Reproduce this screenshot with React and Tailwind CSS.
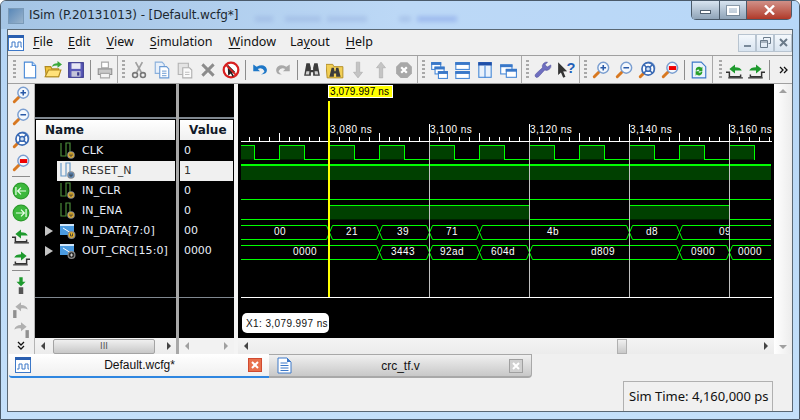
// ISim waveform window
const GREEN = '#00ff00';
const FILL = '#004000';

const Grip = () => (
  <div className="w-[3px] h-[19px] mx-[2px] shrink-0 bg-[repeating-linear-gradient(180deg,#a8a8a8_0,#a8a8a8_2px,transparent_2px,transparent_4px)]" />
);
const Bar = () => <div className="w-px h-[20px] mx-[2.5px] shrink-0 bg-[#8c8c8c]" />;

const Ico = ({ children, s = 18 }) => (
  <svg width={s} height={s} viewBox="0 0 16 16" className="shrink-0">{children}</svg>
);

const Wave16 = () => (
  <Ico s={16}>
    <rect x="0.5" y="0.5" width="15" height="15" fill="#fff" stroke="#3c78c8" />
    <rect x="0" y="0" width="16" height="3" fill="#2a5fb0" />
    <path d="M2 12h2V7h3v5h3V7h3v5h1" fill="none" stroke="#3c78c8" />
  </Ico>
);
const Doc = () => (
  <Ico>
    <path d="M3 1h7l3 3v11H3z" fill="#fff" stroke="#4a8ad8" />
    <path d="M10 1v3h3" fill="#cfe2f8" stroke="#4a8ad8" />
  </Ico>
);
const Open = () => (
  <Ico>
    <path d="M1 5h5l1 2h6v7H2z" fill="#f2c53d" stroke="#b08a20" />
    <path d="M1 14l3-6h11l-2 6z" fill="#ffe27a" stroke="#b08a20" />
    <path d="M7 5q1-3 5-3V0l4 3-4 3V4q-3 0-5 1z" fill="#3aa83a" />
  </Ico>
);
const Save = () => (
  <Ico>
    <rect x="1.5" y="1.5" width="13" height="13" fill="#5a5ab8" stroke="#38388c" />
    <rect x="4" y="2" width="8" height="5" fill="#e8e8f4" />
    <rect x="4" y="9" width="8" height="5" fill="#c4c4d8" />
    <rect x="9" y="10" width="2" height="3" fill="#38388c" />
  </Ico>
);
const Print = () => (
  <Ico>
    <path d="M5 1h6v5H5z" fill="#fff" stroke="#a8a8a8" />
    <path d="M2 7h12v5H2z" fill="#c8c8c8" stroke="#909090" />
    <path d="M4 11h8v4H4z" fill="#f4f4f4" stroke="#a8a8a8" />
  </Ico>
);
const Cut = () => (
  <Ico>
    <path d="M5 1l5 9M11 1L6 10" stroke="#a0a0a0" strokeWidth="1.5" fill="none" />
    <circle cx="4.5" cy="12.5" r="2.2" fill="none" stroke="#787878" strokeWidth="1.4" />
    <circle cx="11.5" cy="12.5" r="2.2" fill="none" stroke="#787878" strokeWidth="1.4" />
  </Ico>
);
const Copy = () => (
  <Ico>
    <path d="M2 1h6l2 2v8H2z" fill="#e8f0fa" stroke="#8ab0dc" />
    <path d="M6 5h6l2 2v8H6z" fill="#fff" stroke="#6a9ad4" />
    <path d="M8 9h4M8 11h4M8 13h4" stroke="#8ab0dc" />
  </Ico>
);
const Paste = () => (
  <Ico>
    <path d="M2 2h9v10H2z" fill="#e4e4e4" stroke="#b4b4b4" />
    <path d="M6 6h6l2 2v7H6z" fill="#fafafa" stroke="#b0b0b0" />
    <path d="M8 10h4M8 12h4" stroke="#c0c0c0" />
  </Ico>
);
const Del = () => (
  <Ico><path d="M3 3l10 10M13 3L3 13" stroke="#8c8c8c" strokeWidth="2.6" /></Ico>
);
const NoSign = () => (
  <Ico>
    <circle cx="8" cy="8" r="6.5" fill="#fff" stroke="#d82020" strokeWidth="2" />
    <path d="M5 3l7 7-3 .4 1.6 3-1.2.6-1.6-3L5.5 13z" fill="#222" />
    <path d="M3.5 3.5l9 9" stroke="#d82020" strokeWidth="1.6" />
  </Ico>
);
const Undo = () => (
  <Ico>
    <path d="M2 3v6h6L6 7q4-2 6 2-1 2-3 3 6 0 5-5-2-5-9-2z" fill="#1f78c8" />
  </Ico>
);
const Redo = () => (
  <Ico>
    <g transform="matrix(-1 0 0 1 16 0)"><path d="M2 3v6h6L6 7q4-2 6 2-1 2-3 3 6 0 5-5-2-5-9-2z" fill="#a8a8a8" /></g>
  </Ico>
);
const Binoc = () => (
  <Ico>
    <path d="M3 2h3l1 4v2h2V6l1-4h3l2 11H9v-3H7v3H1z" fill="#3c3c3c" />
    <path d="M3 9l-.6 3h3l.3-3zM10.300 9l.3 3h3l-.6-3z" fill="#d0d0d0" />
  </Ico>
);
const FolderBinoc = () => (
  <Ico>
    <path d="M0 3h6l1 2h8v10H1z" fill="#f2cf55" stroke="#b08a20" strokeWidth=".8" />
    <path d="M5 6h2l.5 3h1L9 6h2l2 8H9V11H7v3H3z" fill="#3c3c3c" />
  </Ico>
);
const ArrowV = ({ up }) => (
  <Ico>
    <path d={up ? 'M8 1l4 5H9.500v9h-3V6H4z' : 'M8 15l4-5H9.500V1h-3v9H4z'} fill="#c4c4c4" stroke="#b0b0b0" strokeWidth=".6" />
  </Ico>
);
const Stop = () => (
  <Ico>
    <path d="M5 1h6l4 4v6l-4 4H5l-4-4V5z" fill="#a8a8a8" />
    <path d="M5.500 5.500l5 5M10.500 5.500l-5 5" stroke="#fff" strokeWidth="2" />
  </Ico>
);
const Win = ({ x, y, w, h }) => (
  <g>
    <rect x={x + 0.5} y={y + 0.5} width={w} height={h} fill="#fff" stroke="#4a8ad8" />
    <rect x={x} y={y} width={w + 1} height="2.500" fill="#3a78c8" />
  </g>
);
const Cascade = () => (
  <Ico><Win x={1} y={1} w={8} h={6} /><Win x={4} y={5} w={8} h={6} /><Win x={7} y={9} w={8} h={6} /></Ico>
);
const TileH = () => (
  <Ico>
    <Win x={2} y={1} w={12} h={6} /><Win x={2} y={9} w={12} h={6} />
  </Ico>
);
const TileV = () => (
  <Ico>
    <rect x="2.500" y="1.500" width="11" height="13" fill="#eaf2fb" stroke="#4a8ad8" />
    <rect x="2" y="1" width="12" height="3" fill="#1f4fa8" />
    <path d="M8 4v11" stroke="#4a8ad8" />
  </Ico>
);
const Tile2 = () => (
  <Ico><Win x={1} y={3} w={10} h={8} /><Win x={6} y={7} w={9} h={7} /></Ico>
);
const Wrench = () => (
  <Ico>
    <path d="M15 3.500a4 4 0 0 1-5.500 4.500L4 14q-2 1.500-3-.5-.5-1 1-2.500l5.500-5A4 4 0 0 1 12 1L9.800 3.400l2 2z" fill="#6f6fc0" stroke="#50509c" strokeWidth=".5" />
  </Ico>
);
const HelpCur = () => (
  <Ico>
    <path d="M1 1l8 8-3.500.4L7.500 14l-2 .8-2-4.500L1 12.500z" fill="#333" />
    <text x="8.500" y="11" fontSize="13" fontWeight="700" fill="#1f5fb8" fontFamily="Liberation Sans, sans-serif">?</text>
  </Ico>
);
const Lens = ({ children }) => (
  <Ico>
    <path d="M6 10l-4 4" stroke="#d87820" strokeWidth="2.600" strokeLinecap="round" />
    <circle cx="10" cy="6" r="4.800" fill="#f4f8fd" stroke="#7a9ed0" strokeWidth="1.300" />
    {children}
  </Ico>
);
const ZoomIn = () => <Lens><path d="M7.500 6h5M10 3.500v5" stroke="#2a5aa8" strokeWidth="1.400" /></Lens>;
const ZoomOut = () => <Lens><path d="M7.500 6h5" stroke="#2a5aa8" strokeWidth="1.400" /></Lens>;
const ZoomFit = () => (
  <Lens>
    <circle cx="9" cy="7" r="5.500" fill="#fff" stroke="#3a6ab4" strokeWidth="1.500" />
    <circle cx="9" cy="7" r="2.200" fill="#cfe0f4" stroke="#3a6ab4" strokeWidth="1.300" />
    <path d="M5 3l2.500 2.500M13 3l-2.500 2.500M5 11l2.500-2.500M13 11l-2.500-2.500" stroke="#3a6ab4" strokeWidth="1.300" />
  </Lens>
);
const ZoomRed = () => <Lens><rect x="7" y="4.500" width="6.500" height="3.500" fill="#f00000" /></Lens>;
const Reload = () => (
  <Ico>
    <path d="M2 1h8l4 4v10H2z" fill="#eaf3fc" stroke="#3c78c8" />
    <path d="M5 8a3 3 0 0 1 5-2l1-1v4H7.500l1-1a2 2 0 0 0-3 1z" fill="#28a028" />
    <path d="M11 10a3 3 0 0 1-5 2l-1 1V9h3.500l-1 1a2 2 0 0 0 3-1z" fill="#28a028" />
  </Ico>
);
const StepL = () => (
  <Ico>
    <path d="M0 10h3v4h10v-2" fill="none" stroke="#333" strokeWidth="1.300" />
    <path d="M3 7l5-4v2.500q5 0 6 3H8V11z" fill="#1e9a2e" />
    <path d="M2 15h13" stroke="#333" />
  </Ico>
);
const StepR = () => (
  <Ico>
    <path d="M16 10h-3v4H3v-2" fill="none" stroke="#333" strokeWidth="1.300" />
    <path d="M13 7L8 3v2.500q-5 0-6 3h6V11z" fill="#1e9a2e" />
    <path d="M1 15h13" stroke="#333" />
  </Ico>
);
const Chev = () => (
  <svg width="10" height="8" viewBox="0 0 10 8" className="shrink-0">
    <path d="M1 1l3 3-3 3M5 1l3 3-3 3" fill="none" stroke="#111" strokeWidth="1.300" />
  </svg>
);
const Chev2 = () => (
  <svg width="8" height="10" viewBox="0 0 8 10">
    <path d="M1 1l3 3 3-3M1 5l3 3 3-3" fill="none" stroke="#111" strokeWidth="1.300" />
  </svg>
);
const GoBtn = ({ flip }) => (
  <Ico>
    <circle cx="8" cy="8" r="7" fill="#3cb83c" stroke="#2a9a2a" />
    <path d={flip ? 'M3.500 8h7M8 5l3 3-3 3M12.500 4.500v7' : 'M12.500 8h-7M8 5L5 8l3 3M3.500 4.500v7'} fill="none" stroke="#eaffea" strokeWidth="1.100" />
  </Ico>
);
const StepDown = () => (
  <Ico>
    <path d="M8 9l4-4H9.500V1h-3v4H4z" fill="#1e9a2e" />
    <rect x="6" y="10" width="4" height="6" fill="#555" />
  </Ico>
);
const GreyHookL = () => (
  <Ico>
    <rect x="1" y="9" width="3" height="7" fill="#909090" />
    <path d="M3 6l5-4v2.500q5 0 6 4-3-1.500-6-1V10z" fill="#b0b0b0" />
  </Ico>
);
const GreyHookR = () => (
  <Ico>
    <rect x="12" y="9" width="3" height="7" fill="#909090" />
    <path d="M13 6L8 2v2.500q-5 0-6 4 3-1.500 6-1V10z" fill="#b0b0b0" />
  </Ico>
);

const Slot = ({ children, w = 'w-[23px]' }) => (
  <div className={`${w} h-full flex items-center justify-center shrink-0`}>{children}</div>
);

const Group = ({ children, className = '' }) => (
  <div className={`flex items-center h-full pl-[2px] border-r border-[#a8a8a8] shrink-0 ${className}`}>
    <Grip />
    {children}
  </div>
);

const Toolbar = () => (
  <div className="h-[29px] flex items-center bg-[#f0f0f0] border-y border-[#a0a0a0] pl-[1px]">
    <Group className="w-[109px]">
      <Slot><Doc /></Slot><Slot><Open /></Slot><Slot><Save /></Slot><Bar /><Slot><Print /></Slot>
    </Group>
    <Group className="w-[300px]">
      <Slot><Cut /></Slot><Slot><Copy /></Slot><Slot><Paste /></Slot><Slot><Del /></Slot><Slot><NoSign /></Slot>
      <Bar />
      <Slot><Undo /></Slot><Slot><Redo /></Slot>
      <Bar />
      <Slot><Binoc /></Slot><Slot><FolderBinoc /></Slot><Slot><ArrowV /></Slot><Slot><ArrowV up /></Slot><Slot><Stop /></Slot>
    </Group>
    <Group className="w-[104px]">
      <Slot><Cascade /></Slot><Slot><TileH /></Slot><Slot><TileV /></Slot><Slot><Tile2 /></Slot>
    </Group>
    <Group className="w-[58px]">
      <Slot><Wrench /></Slot><Slot><HelpCur /></Slot>
    </Group>
    <Group className="w-[133px]">
      <Slot><ZoomIn /></Slot><Slot><ZoomOut /></Slot><Slot><ZoomFit /></Slot><Slot><ZoomRed /></Slot>
      <Bar />
      <Slot><Reload /></Slot>
    </Group>
    <div className="flex items-center h-full pl-[4px] shrink-0">
      <Grip />
      <Slot w="w-[21px]"><StepL /></Slot><Slot w="w-[21px]"><StepR /></Slot>
      <Bar />
      <Slot w="w-[24px]"><Chev /></Slot>
    </div>
  </div>
);

const SideSlot = ({ children, h = 'h-[22px]' }) => (
  <div className={`${h} flex items-center justify-center shrink-0`}>{children}</div>
);
const SideRule = () => <div className="h-px mx-[4px] my-[2px] shrink-0 bg-[#8c8c8c]" />;

const LeftBar = () => (
  <div className="w-[27px] shrink-0 flex flex-col bg-[#f0f0f0] border-r border-[#b4b4b4]">
    <SideSlot><ZoomIn /></SideSlot>
    <SideSlot><ZoomOut /></SideSlot>
    <SideSlot h="h-[24px]"><ZoomFit /></SideSlot>
    <SideSlot><ZoomRed /></SideSlot>
    <SideRule />
    <SideSlot h="h-[23px]"><GoBtn /></SideSlot>
    <SideSlot><GoBtn flip /></SideSlot>
    <SideSlot><StepL /></SideSlot>
    <SideSlot><StepR /></SideSlot>
    <SideRule />
    <SideSlot h="h-[24px]"><StepDown /></SideSlot>
    <SideSlot h="h-[23px]"><GreyHookL /></SideSlot>
    <SideSlot h="h-[18px]"><GreyHookR /></SideSlot>
    <div className="flex-1 flex items-center justify-center"><Chev2 /></div>
  </div>
);

const BitIcon = ({ color = '#4a8a3a', lamp = '#e8b020' }) => (
  <svg width="17" height="18" viewBox="0 0 17 18" className="shrink-0">
    <path d="M1 1v13h5V1h4v12" fill="none" stroke={color} strokeWidth="1.200" />
    <circle cx="11" cy="13" r="3.800" fill="#8a8a8a" />
    <circle cx="11" cy="13" r="2.800" fill={lamp} />
    <path d="M10 11.500v2.500h2v-2.500" fill="none" stroke="#3a3a3a" strokeWidth=".9" />
  </svg>
);
const BusIcon = ({ out }) => (
  <svg width="17" height="18" viewBox="0 0 17 18" className="shrink-0">
    <path d="M0 2h14v11H0z" fill="#4a9ae0" />
    <path d="M0 2h14v2H0z" fill="#cfe6fa" />
    <path d="M3 6l8 5" stroke="#fff" />
    <circle cx="11.500" cy="13" r="4" fill="#8a8a8a" />
    <circle cx="11.500" cy="13" r="2.800" fill={out ? '#2a2a2a' : '#e8b020'} />
    {out
      ? <path d="M10 13h3M11.500 11.500v3" stroke="#ccc" />
      : <path d="M10.500 11.500v2.500h2v-2.500" fill="none" stroke="#3a3a3a" strokeWidth=".9" />}
  </svg>
);

const signals = [
  { name: 'CLK', value: '0', icon: <BitIcon /> },
  { name: 'RESET_N', value: '1', icon: <BitIcon color="#6a9ac8" lamp="#5a8ac0" />, selected: true },
  { name: 'IN_CLR', value: '0', icon: <BitIcon /> },
  { name: 'IN_ENA', value: '0', icon: <BitIcon /> },
  { name: 'IN_DATA[7:0]', value: '00', icon: <BusIcon />, bus: true },
  { name: 'OUT_CRC[15:0]', value: '0000', icon: <BusIcon out />, bus: true },
];

const PaneHead = ({ children }) => (
  <div className="h-[20px] mt-[1px] mx-[1px] pl-[9px] bg-gradient-to-b from-white to-[#f0f0f0] font-['DejaVu_Sans'] font-bold text-[12px] text-[#101828] flex items-center">
    {children}
  </div>
);

const NamePane = () => (
  <div className="h-full bg-black flex flex-col">
    <div className="h-[33px] shrink-0" />
    <div className="h-[2px] bg-[#808890] shrink-0" />
    <PaneHead>Name</PaneHead>
    <div className="h-[1px] shrink-0" />
    <div className="flex-1">
      {signals.map((s) => (
        <div key={s.name} className="h-[20px] flex items-center">
          <div className="w-[22px] flex justify-end pr-[4px] shrink-0">
            {s.bus && <div className="border-l-[8px] border-l-[#c4c4c4] border-y-[5px] border-y-transparent" />}
          </div>
          <div className={`flex-1 mr-[1px] h-full flex items-center ${s.selected ? 'bg-[#f0f0f0] text-[#333]' : 'text-[#e8eef8]'}`}>
            <div className="w-[25px] pl-[3px] shrink-0">{s.icon}</div>
            <span className="font-['DejaVu_Sans'] text-[11px] pt-[1px] tracking-[0.1px] whitespace-nowrap">{s.name}</span>
          </div>
        </div>
      ))}
    </div>
    <div className="h-px bg-[#808890] mb-[40px] shrink-0" />
  </div>
);

const ValuePane = () => (
  <div className="h-full bg-black flex flex-col">
    <div className="h-[33px] shrink-0" />
    <div className="h-[2px] bg-[#808890] shrink-0" />
    <PaneHead>Value</PaneHead>
    <div className="h-[1px] shrink-0" />
    <div className="flex-1">
      {signals.map((s) => (
        <div key={s.name} className={`h-[20px] mx-[1px] pl-[4px] pt-[1px] flex items-center font-['DejaVu_Sans'] text-[11px] tracking-[-0.1px] ${s.selected ? 'bg-[#f0f0f0] text-[#333]' : 'text-[#e8eef8]'}`}>
          {s.value}
        </div>
      ))}
    </div>
    <div className="h-px bg-[#808890] mb-[40px] shrink-0" />
  </div>
);

// waveform helpers, all coordinates in window pixels
const clkPath = () => {
  let d = 'M241 145.500H254.500V159.500';
  for (let x = 279.5; x < 760; x += 50) {
    d += `H${x}V145.500H${Math.min(x + 25, 771)}`;
    if (x + 25 < 771) d += 'V159.500';
  }
  return d;
};
const clkFill = () => {
  const r = [[241, 254.5]];
  for (let x = 279.5; x < 760; x += 50) r.push([x, Math.min(x + 25, 771)]);
  return r;
};
const busPath = (trs, top, bot, end) => {
  const pts = [241, ...trs, end];
  let d = '';
  pts.slice(0, -1).forEach((a, i) => {
    const b = pts[i + 1];
    const l = i === 0 ? a : a + 3;
    const r = i === pts.length - 2 ? b : b - 3;
    d += `M${l} ${top}H${r}M${l} ${bot}H${r}`;
    if (i < pts.length - 2) d += `M${b - 3} ${top}L${b + 3} ${bot}M${b - 3} ${bot}L${b + 3} ${top}`;
  });
  return d;
};

const dataLabels = [[280, '00'], [352, '21'], [403, '39'], [452, '71'], [553, '4b'], [652, 'd8']];
const crcLabels = [[305, '0000'], [403, '3443'], [452, '92ad'], [503, '604d'], [603, 'd809'], [703, '0900'], [750, '0000']];
const timeLabels = [[329, '3,080 ns'], [429, '3,100 ns'], [529, '3,120 ns'], [629, '3,140 ns'], [729, '3,160 ns']];

const WaveChart = () => {
  const ticks = [];
  for (let x = 249.5; x < 772; x += 10) ticks.push(x);
  const grid = [429.5, 529.5, 629.5, 729.5];
  const font = { fontFamily: 'Liberation Sans, sans-serif', fontSize: 10 };
  return (
    <svg viewBox="238 84 536 254" width="536" height="254" className="block">
      <rect x="238" y="84" width="536" height="254" fill="#000" />
      {/* ruler */}
      <path d="M241 141.500H772" stroke="#fff" shapeRendering="crispEdges" />
      {ticks.map((x) => {
        const major = (x - 279.5) % 50 === 0;
        const labelled = (x - 329.5) % 100 === 0;
        return <path key={x} d={`M${x} 141V${labelled ? 124 : major ? 133 : 137}`} stroke="#fff" shapeRendering="crispEdges" />;
      })}
      {timeLabels.map(([x, t]) => (
        <text key={t} x={x + 1} y={133} fill="#fff" {...font} letterSpacing=".5">{t}</text>
      ))}
      {/* fills */}
      {clkFill().map(([a, b]) => <rect key={a} x={a} y="145.500" width={b - a} height="14" fill={FILL} />)}
      <rect x="241" y="165" width="530" height="15" fill={FILL} />
      <rect x="330" y="205.500" width="199.500" height="14" fill={FILL} />
      <rect x="629.500" y="205.500" width="100" height="14" fill={FILL} />
      {/* traces */}
      <g fill="none" stroke={GREEN} shapeRendering="crispEdges">
        <path d={clkPath()} />
        <path d="M241 165H771" strokeWidth="2" />
        <path d="M241 199.500H771" />
        <path d="M241 219.500H329.500V205.500H529.500V219.500H629.500V205.500H729.500V219.500H771" />
      </g>
      <g fill="none" stroke={GREEN}>
        <path d={busPath([329.5, 379.5, 429.5, 479.5, 629.5, 679.5], 225.5, 239.5, 771)} />
        <path d={busPath([379.5, 429.5, 479.5, 529.5, 679.5, 729.5], 245.5, 259.5, 771)} />
      </g>
      <g fill="#fff" textAnchor="middle" {...font} letterSpacing=".5">
        {dataLabels.map(([x, t]) => <text key={x} x={x} y={235}>{t}</text>)}
        {crcLabels.map(([x, t]) => <text key={x} x={x} y={255}>{t}</text>)}
      </g>
      <svg x="680" y="225" width="49" height="16" viewBox="680 225 49 16">
        <text x="719" y="235" fill="#fff" {...font} letterSpacing=".5">09</text>
      </svg>
      {/* grid and cursor */}
      {grid.map((x) => <path key={x} d={`M${x} 142V297`} stroke="#c0c0c0" shapeRendering="crispEdges" />)}
      <path d="M241 297.500H772" stroke="#fff" shapeRendering="crispEdges" />
      <rect x="328" y="101" width="2" height="196" fill="#ffff00" />
      <rect x="328.500" y="85.500" width="64" height="12" fill="#ffff00" stroke="#fff" />
      <text x="330" y="95" fill="#000" {...font} letterSpacing=".1">3,079.997 ns</text>
      <rect x="242" y="313" width="87" height="20" rx="5" fill="#fff" />
      <text x="246" y="327" fill="#111" {...font} letterSpacing=".4">X1: 3,079.997 ns</text>
    </svg>
  );
};

const ArrowH = ({ left, c = '#444' }) => (
  <svg width="5" height="8" viewBox="0 0 5 8" className="shrink-0">
    <path d={left ? 'M4 0v8L0 4z' : 'M1 0v8l4-4z'} fill={c} />
  </svg>
);

const NameScroll = () => (
  <div className="h-[16px] flex items-center bg-gradient-to-b from-[#f4f4f4] to-[#ececec] pl-[6px] pr-[5px]">
    <ArrowH left />
    <div className="ml-[7px] w-[102px] h-[15px] rounded-[2px] border border-[#a4a4a4] bg-gradient-to-b from-[#f0f0f0] to-[#c8c8c8] flex items-center justify-center text-[9px] leading-none text-[#555]">
      III
    </div>
    <div className="flex-1" />
    <ArrowH />
  </div>
);

const ValueScroll = () => (
  <div className="h-[16px] flex items-center justify-between bg-[#f2f2f2] px-[6px]">
    <ArrowH left c="#a0a0a0" />
    <ArrowH c="#a0a0a0" />
  </div>
);

const WaveScroll = () => (
  <div className="h-[16px] flex items-center bg-gradient-to-b from-[#f4f4f4] to-[#ececec] pl-[6px] pr-[6px]">
    <ArrowH left />
    <div className="w-[368px] shrink-0" />
    <div className="w-[10px] h-[15px] border border-[#b0b0b0] bg-gradient-to-b from-[#f0f0f0] to-[#c8c8c8] shrink-0" />
    <div className="flex-1" />
    <ArrowH />
  </div>
);

const VScroll = () => (
  <div className="w-[18px] shrink-0 flex flex-col items-center justify-between py-[5px] bg-gradient-to-r from-white to-[#ececec]">
    <div className="border-b-[4px] border-b-[#a0a0a0] border-x-[4px] border-x-transparent" />
    <div className="border-t-[4px] border-t-[#a0a0a0] border-x-[4px] border-x-transparent" />
  </div>
);

const CloseMark = ({ active }) => (
  <div className={`w-[14px] h-[14px] shrink-0 flex items-center justify-center border ${active ? 'bg-[#e8704c] border-[#d04a30]' : 'bg-[#d0d0d0] border-[#a0a0a0]'}`}>
    <svg width="8" height="8" viewBox="0 0 8 8"><path d="M1 1l6 6M7 1L1 7" stroke="#fff" strokeWidth="2" /></svg>
  </div>
);

const DocTab = () => (
  <svg width="15" height="17" viewBox="0 0 15 17" className="shrink-0">
    <path d="M1 1h9l4 4v11H1z" fill="#fff" stroke="#3c78c8" />
    <path d="M10 1v4h4z" fill="#3c78c8" />
    <path d="M3.500 6h7M3.500 8.500h8M3.500 11h8M3.500 13.500h8" stroke="#3c78c8" />
  </svg>
);

const Tabs = () => (
  <div className="h-[24px] flex shrink-0 bg-[#f0f0f0] pl-[1px]">
    <div className="w-[260px] h-full flex items-center pl-[6px] pr-[7px] border-b-[2px] border-[#2f86e0] rounded-bl-[3px] bg-gradient-to-b from-white to-[#f0f0f0]">
      <Wave16 />
      <span className="flex-1 text-center font-['Liberation_Sans'] text-[12px] text-[#111]">Default.wcfg*</span>
      <CloseMark active />
    </div>
    <div className="w-[263px] h-full flex items-center pl-[8px] pr-[8px] border-b-[2px] border-r border-t border-[#a8a8a8] rounded-br-[4px] bg-gradient-to-b from-[#f0f0f0] to-[#c8c8c8]">
      <DocTab />
      <span className="flex-1 text-center font-['Liberation_Sans'] text-[12px] text-[#111]">crc_tf.v</span>
      <CloseMark />
    </div>
  </div>
);

const MenuItem = ({ k, rest, pre = '', className = '' }) => (
  <span className={`whitespace-nowrap ${className}`}>
    {pre}<span className="underline underline-offset-[2px]">{k}</span>{rest}
  </span>
);

const MdiBtn = ({ children }) => (
  <div className="w-[18px] h-[18px] border border-[#b8c4d0] bg-gradient-to-b from-[#f4f8fc] to-[#d8e4f0] flex items-center justify-center">
    {children}
  </div>
);

const CapBtn = ({ children, className = '' }) => (
  <div className={`h-[19px] flex items-center justify-center border-b border-r border-[#4a5a6a] ${className}`}>{children}</div>
);

export default function App() {
  return (
    <div className="w-[800px] h-[420px] overflow-hidden flex flex-col rounded-t-[6px] border border-[#4a5a6a] bg-gradient-to-b from-[#b4d4f4] to-[#c4e0fa] font-['DejaVu_Sans']">
      {/* title bar */}
      <div className="h-[28px] shrink-0 flex items-start pl-[7px] pr-[7px] bg-gradient-to-r from-[#a4c4e4] via-[#bcd8f6] to-[#b8d8f8]">
        <div className="mt-[7px] w-[16px] h-[16px] bg-gradient-to-br from-[#5a88b8] to-[#9ab4cc] border border-[#7a9ab8] shrink-0" />
        <span className="mt-[5px] ml-[5px] text-[12px] text-[#1c2830] whitespace-nowrap w-[226px] tracking-[-0.1px]">ISim (P.20131013) - [Default.wcfg*]</span>
        <div className="mt-[15px] flex gap-[6px] blur-[2px] opacity-35 shrink-0">
          <div className="w-[18px] h-[6px] bg-[#8aa4d8]" />
          <div className="w-[36px] h-[6px] bg-[#8aa4d8] ml-[6px]" />
          <div className="w-[40px] h-[6px] bg-[#8aa4d8]" />
          <div className="w-[12px] h-[6px] bg-[#8aa4d8] ml-[26px]" />
          <div className="w-[40px] h-[6px] bg-[#6a88e0]" />
        </div>
        <div className="ml-auto flex shrink-0 rounded-b-[5px] overflow-hidden border-l border-[#4a5a6a]">
          <CapBtn className="w-[28px] bg-gradient-to-b from-[#d8e4f0] to-[#8fa4b8]">
            <div className="w-[11px] h-[4px] mt-[4px] bg-white border border-[#506070]" />
          </CapBtn>
          <CapBtn className="w-[27px] bg-gradient-to-b from-[#d8e4f0] to-[#8fa4b8]">
            <div className="w-[12px] h-[9px] bg-white/30 border-[2px] border-white outline outline-[#506070]/50" />
          </CapBtn>
          <CapBtn className="w-[45px] bg-gradient-to-b from-[#d09088] to-[#b03828]">
            <svg width="11" height="10" viewBox="0 0 11 10"><path d="M1 0.500l9 9M10 0.500l-9 9" stroke="#fff" strokeWidth="2.400" /></svg>
          </CapBtn>
        </div>
      </div>

      {/* client area */}
      <div className="flex-1 min-h-0 mx-[6px] mb-[7px] flex flex-col bg-[#f0f0f0] border border-[#5a6874]">
        {/* menu bar */}
        <div className="h-[25px] shrink-0 flex items-center font-['Noto_Sans'] text-[12.5px] text-[#111]">
          <Wave16 />
          <MenuItem className="ml-[9px]" k="F" rest="ile" />
          <MenuItem className="ml-[15px]" k="E" rest="dit" />
          <MenuItem className="ml-[16px]" k="V" rest="iew" />
          <MenuItem className="ml-[16px]" k="S" rest="imulation" />
          <MenuItem className="ml-[16px]" k="W" rest="indow" />
          <MenuItem className="ml-[14px]" pre="La" k="y" rest="out" />
          <MenuItem className="ml-[16px]" k="H" rest="elp" />
          <div className="ml-auto flex">
            <MdiBtn><div className="w-[7px] h-[2px] mt-[6px] bg-[#7a8a9a]" /></MdiBtn>
            <MdiBtn>
              <svg width="11" height="11" viewBox="0 0 11 11"><path d="M3.500 2.500V.500h7v6h-2M.500 3.500h7v7h-7zM.500 5h7" fill="none" stroke="#6a7a8a" /></svg>
            </MdiBtn>
            <MdiBtn>
              <svg width="9" height="9" viewBox="0 0 9 9"><path d="M1 1l7 7M8 1L1 8" stroke="#6a7a8a" strokeWidth="2" /></svg>
            </MdiBtn>
          </div>
        </div>

        <Toolbar />

        {/* work area */}
        <div className="h-[270px] shrink-0 flex bg-[#f0f0f0]">
          <LeftBar />
          <div className="w-[141px] shrink-0 flex flex-col">
            <div className="h-[254px] shrink-0"><NamePane /></div>
            <NameScroll />
          </div>
          <div className="w-[3px] shrink-0 bg-[#a8a8a8]" />
          <div className="w-[55px] shrink-0 flex flex-col">
            <div className="h-[254px] shrink-0"><ValuePane /></div>
            <ValueScroll />
          </div>
          <div className="w-[4px] shrink-0 bg-[#f4f4f4]" />
          <div className="w-[536px] shrink-0 flex flex-col">
            <WaveChart />
            <WaveScroll />
          </div>
          <VScroll />
        </div>

        <Tabs />

        {/* status bar */}
        <div className="flex-1 min-h-0 flex justify-end items-end pr-[19px]">
          <div className="w-[150px] h-[30px] border-l border-t border-r border-[#b0b0b0] flex items-center pl-[5px] font-['Noto_Sans'] text-[13px] text-[#111] whitespace-nowrap">
            Sim Time: 4,160,000 ps
          </div>
        </div>
      </div>
    </div>
  );
}
